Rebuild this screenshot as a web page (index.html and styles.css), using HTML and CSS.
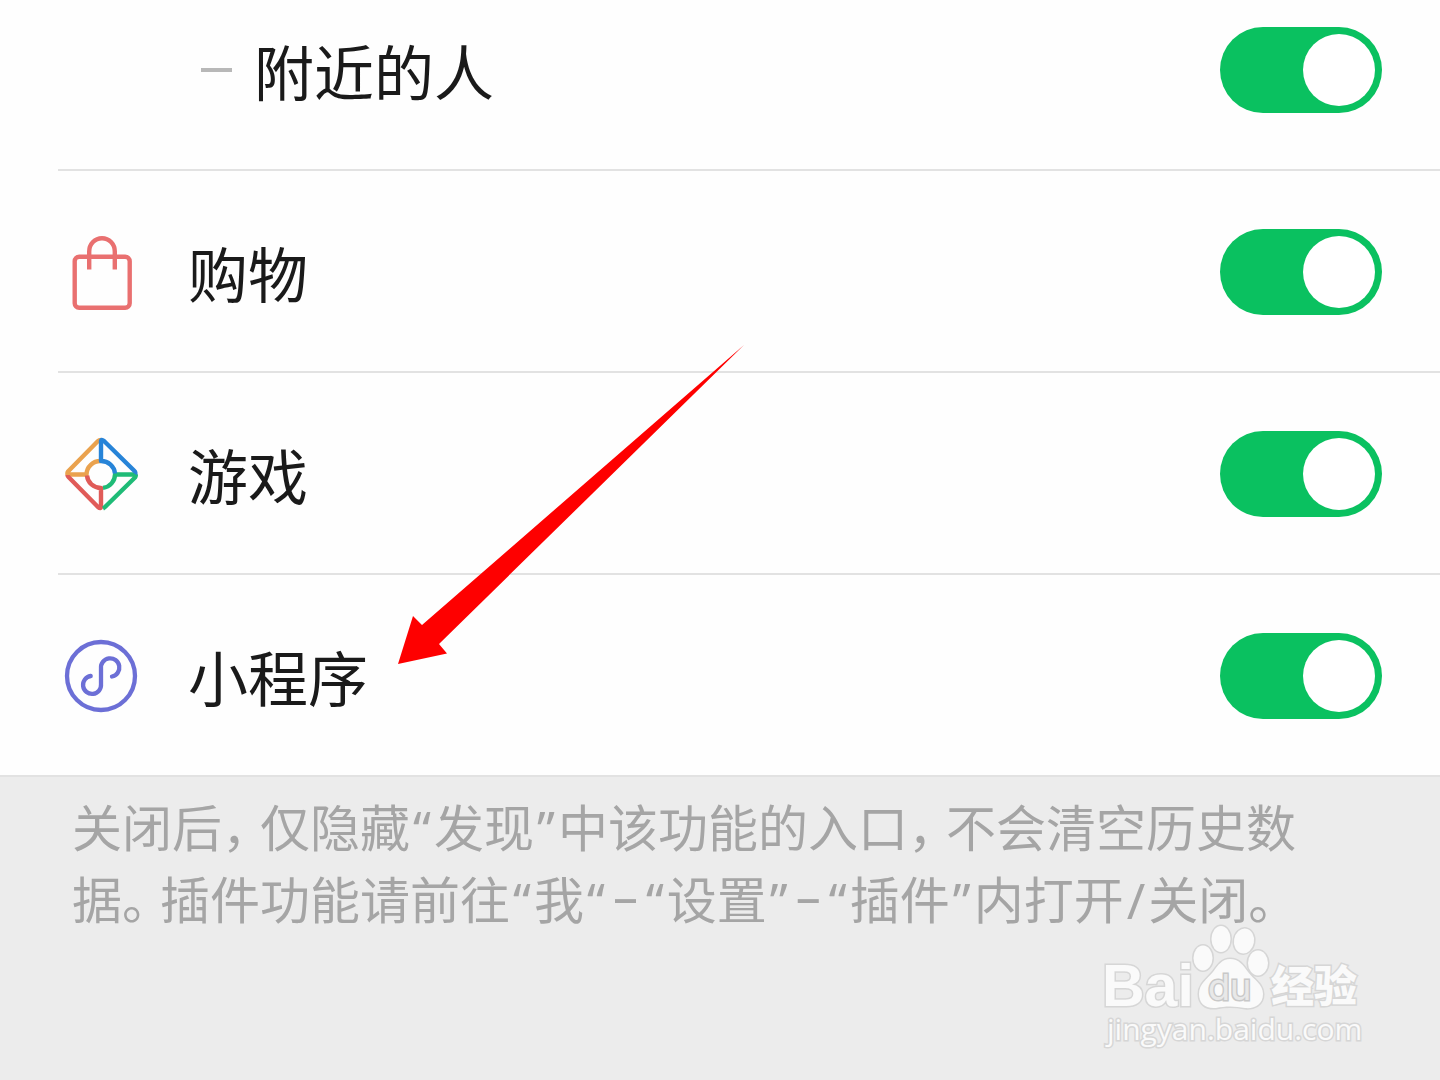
FILE: index.html
```html
<!DOCTYPE html>
<html lang="zh-CN">
<head>
<meta charset="utf-8">
<meta name="viewport" content="width=device-width, initial-scale=1">
<title>发现页管理</title>
<link rel="stylesheet" href="styles.css">
</head>
<body>
<main class="page">
  <ul class="list">
    <li class="row row-sub">
      <span class="dash"></span>
      <label class="label" for="nearby">附近的人</label>
      <input class="switch" type="checkbox" id="nearby" checked>
    </li>
    <li class="row">
      <svg class="icon" viewBox="0 0 88 88" fill="none" stroke="#e97070" stroke-width="4.4" aria-hidden="true">
        <rect x="18.7" y="28.7" width="55" height="51" rx="4.5"/>
        <path d="M33.2 41.500V23.500a12.800 13.300 0 0 1 25.600 0V41.500"/>
      </svg>
      <label class="label" for="shopping">购物</label>
      <input class="switch" type="checkbox" id="shopping" checked>
    </li>
    <li class="row">
      <svg class="icon" viewBox="0 1.5 88 88" fill="none" stroke-width="4.4" stroke-linejoin="round" aria-hidden="true">
        <path stroke="#eaa24e" d="M45 11.500q-2 0-3 1L12 43q-2 3 1 3H30.500A14 13.500 0 0 1 45 32.500"/>
        <path stroke="#e05b58" d="M11.500 46.500q0 1 1 2L42 78.500q3 2.500 3-.5V59.500A14 13.500 0 0 1 31 47"/>
        <path stroke="#1fbb77" d="M47 80q1-.5 2-1.500L79 49q2-3-1-3H59A14 13.500 0 0 1 47 59.400"/>
        <path stroke="#2784d8" d="M79 45.500q1-1.500-1-3.500L48 12.500Q45 10 45 13V32.500A14 13.500 0 0 1 59 45"/>
      </svg>
      <label class="label" for="games">游戏</label>
      <input class="switch" type="checkbox" id="games" checked>
    </li>
    <li class="row">
      <svg class="icon" viewBox="0 0 88 88" fill="none" stroke="#6c6fd6" stroke-width="4.3" aria-hidden="true">
        <circle cx="45" cy="44" r="34"/>
        <path stroke-linecap="round" d="M34.700 44A9 9 0 1 0 45 52V36.500A9.200 9.200 0 1 1 56 44.500"/>
      </svg>
      <label class="label" for="mini">小程序</label>
      <input class="switch" type="checkbox" id="mini" checked>
    </li>
  </ul>
  <p class="note">关闭后<span class="punct">，</span>仅隐藏<span class="latin">“</span>发现<span class="latin">”</span>中该功能的入口<span class="punct">，</span>不会清空历史数据<span class="punct">。</span>插件功能请前往<span class="latin">“</span>我<span class="latin">“</span><span class="latin rule">–</span><span class="latin">“</span>设置<span class="latin">”</span><span class="latin rule">–</span><span class="latin">“</span>插件<span class="latin">”</span>内打开<span class="latin">/</span>关闭<span class="punct">。</span></p>

  <svg class="arrow" viewBox="0 0 348 320" aria-hidden="true">
    <path fill="#fe0000" d="M1 319 16 271l9 9L347 0 42 299l8 9.500z"/>
  </svg>

  <svg class="watermark" viewBox="0 0 270 130" role="img" aria-label="Baidu经验">
    <g class="mark">
      <text class="bai" x="2" y="86">Bai</text>
      <ellipse cx="103" cy="38" rx="9.500" ry="12.500"/>
      <ellipse cx="121" cy="19" rx="9.500" ry="13"/>
      <ellipse cx="144" cy="21" rx="10" ry="12.500" transform="rotate(10 144 21)"/>
      <ellipse cx="158" cy="43" rx="10" ry="12.500"/>
      <path d="M130 39c9 0 13 6 18 13 6 8 15 12 15 22 0 11-9 15-18 14-10-2-20-2-29 0-11 1-17-5-17-14 0-10 8-15 14-22 5-7 9-13 17-13z"/>
      <text class="du" x="108" y="80">du</text>
      <text class="jy" x="171" y="82">经验</text>
      <text class="url" x="7" y="120">jingyan.baidu.com</text>
    </g>
  </svg>
</main>
</body>
</html>
```

FILE: styles.css
```css
* {
  box-sizing: border-box;
}

body {
  margin: 0;
  background: #ececec;
  font-family: "Noto Sans CJK SC", sans-serif;
}

.page {
  position: relative;
  min-height: 100vh;
  overflow: hidden;
}

.list {
  margin: 0;
  padding: 0;
  list-style: none;
  background: #fefefe;
  border-bottom: 2px solid #e2e2e2;
}

.row {
  display: flex;
  align-items: center;
  margin-left: 58px;
  padding: 58px 58px 56px 0;
  border-bottom: 2px solid #e2e2e2;
}

.row:last-child {
  border-bottom: 0;
}

.row-sub {
  padding-top: 27px;
  padding-left: 143px;
}

.dash {
  width: 31px;
  height: 4px;
  margin-right: 22px;
  background: #b8b8b8;
}

.icon {
  width: 88px;
  height: 88px;
  margin: -4px 44px -4px -2px;
}

.label {
  flex: 1;
  color: #1a1a1a;
  font-size: 60px;
  line-height: 86px;
}

.switch {
  appearance: none;
  width: 162px;
  height: 86px;
  margin: 0;
  padding: 7px;
  display: flex;
  justify-content: flex-end;
  border-radius: 43px;
  background: #0ac160;
}

.switch::before {
  content: "";
  width: 72px;
  height: 72px;
  border-radius: 50%;
  background: #fff;
}

.switch:not(:checked) {
  justify-content: flex-start;
  background: #d8d8d8;
}

.note {
  margin: 0;
  padding: 12px 120px 0 72px;
  color: #a5a5a5;
  font-size: 50px;
  line-height: 72px;
}

.punct {
  padding-right: 13px;
  font-feature-settings: "halt";
}

.latin {
  padding: 0 3px;
  font-family: "Noto Sans", sans-serif;
  line-height: 50px;
}

.rule {
  padding: 0 5px;
  vertical-align: 5px;
}

.arrow {
  position: absolute;
  left: 397px;
  top: 345px;
  width: 348px;
  height: 320px;
  pointer-events: none;
}

.watermark {
  position: absolute;
  right: 70px;
  top: 920px;
  width: 270px;
  height: 130px;
  pointer-events: none;
}

.mark {
  fill: #fafafa;
  stroke: #d6d6d6;
  stroke-width: 3px;
  paint-order: stroke;
}

.bai {
  font: 700 59px "Liberation Sans", sans-serif;
}

.du {
  font: 400 36px Inter, sans-serif;
  fill: #e8e8e8;
  stroke: #c8c8c8;
}

.jy {
  font: 900 43px "Noto Sans CJK SC", sans-serif;
}

.url {
  font: 400 30px "Open Sans", sans-serif;
}
```
